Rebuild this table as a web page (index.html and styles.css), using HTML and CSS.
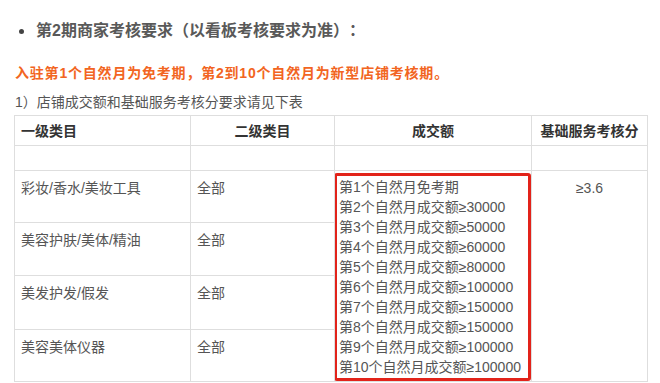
FILE: index.html
```html
<!DOCTYPE html>
<html lang="zh-CN">
<head>
<meta charset="utf-8">
<title>第2期商家考核要求</title>
<link rel="stylesheet" href="styles.css">
</head>
<body>
<div class="page">
  <div class="title-row">
    <span class="dot"></span>
    <h2 class="title">第2期商家考核要求（以看板考核要求为准）：</h2>
  </div>
  <p class="notice">入驻第1个自然月为免考期，第2到10个自然月为新型店铺考核期。</p>
  <p class="intro">1）店铺成交额和基础服务考核分要求请见下表</p>
  <table class="grid">
    <colgroup>
      <col class="c1"><col class="c2"><col class="c3"><col class="c4">
    </colgroup>
    <tr class="head">
      <th class="left">一级类目</th>
      <th>二级类目</th>
      <th>成交额</th>
      <th>基础服务考核分</th>
    </tr>
    <tr class="blank"><td></td><td></td><td></td><td></td></tr>
    <tr class="row-a">
      <td>彩妆/香水/美妆工具</td>
      <td>全部</td>
      <td rowspan="4" class="amount">
        <div class="mark">
          <div>第1个自然月免考期</div>
          <div>第2个自然月成交额≥30000</div>
          <div>第3个自然月成交额≥50000</div>
          <div>第4个自然月成交额≥60000</div>
          <div>第5个自然月成交额≥80000</div>
          <div>第6个自然月成交额≥100000</div>
          <div>第7个自然月成交额≥150000</div>
          <div>第8个自然月成交额≥150000</div>
          <div>第9个自然月成交额≥100000</div>
          <div>第10个自然月成交额≥100000</div>
        </div>
      </td>
      <td rowspan="4" class="score">≥3.6</td>
    </tr>
    <tr class="row-b">
      <td>美容护肤/美体/精油</td>
      <td>全部</td>
    </tr>
    <tr class="row-b">
      <td>美发护发/假发</td>
      <td>全部</td>
    </tr>
    <tr class="row-a">
      <td>美容美体仪器</td>
      <td>全部</td>
    </tr>
  </table>
</div>
</body>
</html>
```

FILE: styles.css
```css
html, body {
  margin: 0;
  padding: 0;
  background: #ffffff;
}

body {
  font-family: "Liberation Sans", "Noto Sans CJK SC", sans-serif;
  color: #555555;
  font-size: 14px;
  text-spacing-trim: space-all;
}

.page {
  padding: 19px 0 0 14px;
}

.title-row {
  display: flex;
  align-items: center;
  height: 24px;
}

.dot {
  width: 5px;
  height: 5px;
  border-radius: 50%;
  background: #444444;
  margin-left: 5px;
  margin-right: 12px;
  flex: none;
}

.title {
  margin: 0;
  font-size: 16px;
  line-height: 24px;
  font-weight: bold;
  color: #595959;
}

.notice {
  margin: 20px 0 0 1px;
  font-size: 14px;
  line-height: 20px;
  font-weight: bold;
  letter-spacing: 0.8px;
  color: #f26522;
}

.intro {
  margin: 9px 0 0 1px;
  font-size: 14px;
  line-height: 20px;
  color: #555555;
}

.grid {
  margin-top: 3px;
  border-collapse: collapse;
  table-layout: fixed;
  width: 633px;
}

.c1 { width: 176px; }
.c2 { width: 144px; }
.c3 { width: 197px; }
.c4 { width: 116px; }

.grid th,
.grid td {
  border: 1px solid #dedede;
  padding: 0;
  font-size: 14px;
  line-height: 20px;
}

.grid th {
  font-weight: bold;
  color: #333333;
  text-align: center;
  vertical-align: middle;
}

.grid th.left {
  text-align: left;
  padding-left: 6px;
}

.head { height: 30px; }
.blank { height: 25px; }
.row-a { height: 52px; }
.row-b { height: 53px; }

.grid td {
  vertical-align: top;
  padding: 7px 0 0 6px;
  color: #555555;
}

.grid td.amount {
  padding: 0;
}

.mark {
  margin: 2px 0 0 -1px;
  border: 3px solid #e2231a;
  border-radius: 3px;
  padding: 1px 2px;
  line-height: 20px;
  color: #555555;
  white-space: nowrap;
}

.grid td.score {
  text-align: center;
  padding-left: 0;
}
```
